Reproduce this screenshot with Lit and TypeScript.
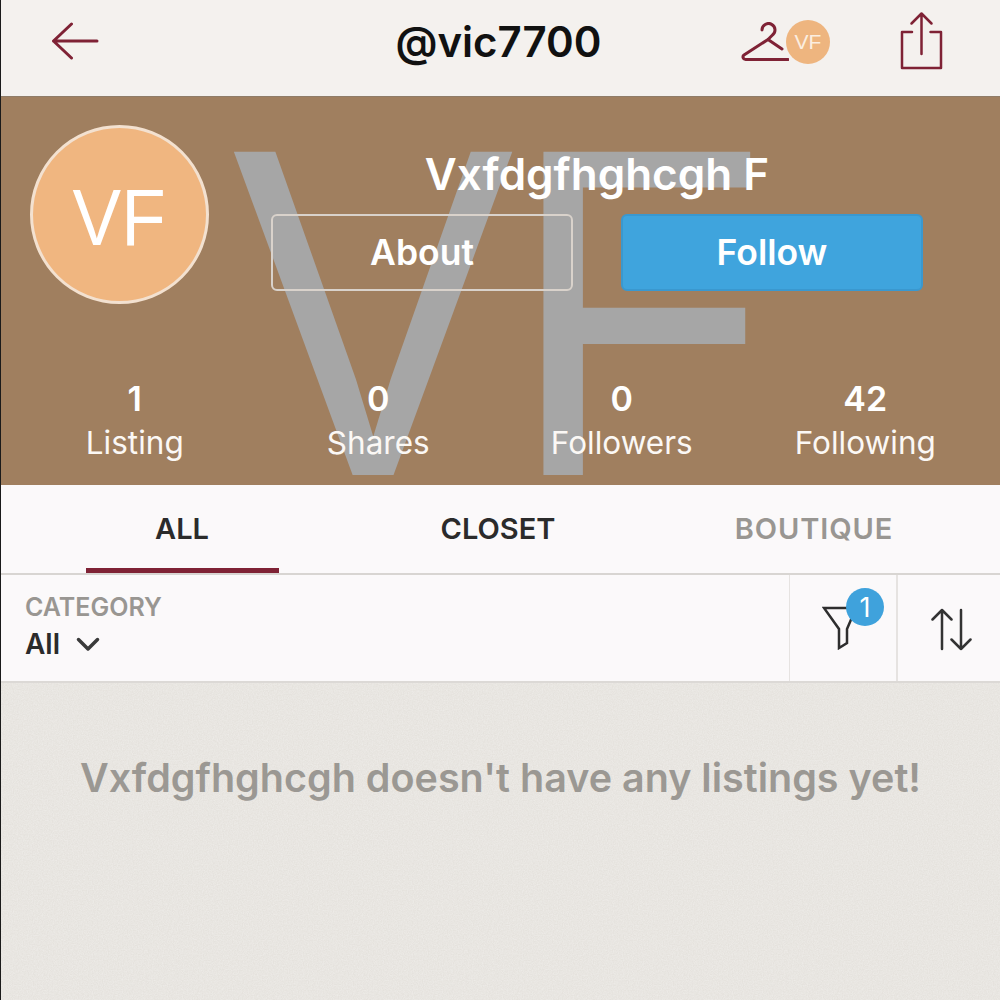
import { LitElement, html, css } from "lit";
import { customElement } from "lit/decorators.js";

@customElement("app-root")
export class AppRoot extends LitElement {
  static styles = css`
    :host { display: block; width: 1000px; height: 1000px; overflow: hidden; font-family: "Inter", "Liberation Sans", sans-serif; font-variant-ligatures: none; }
    * { box-sizing: border-box; }
    .page { height: 1000px; display: flex; flex-direction: column; border-left: 1px solid #1a1a1a; background: #e5e2dd; }
    .header { height: 97px; flex: none; background: #f4f1ee; border-bottom: 1px solid #8f7c68; display: grid; grid-template-columns: 1fr 1fr 1fr; align-items: center; padding: 0 56px 14px 50px; }
    .back { display: block; margin-top: -1px; }
    .handle { font-size: 42px; font-weight: 600; color: #111; text-align: center; white-space: nowrap; padding-left: 2px; }
    .hright { display: flex; justify-content: flex-end; align-items: center; }
    .closet { display: flex; align-items: center; margin-right: 70px; margin-top: 2px; }
    .hanger { margin-top: -1px; }
    .mini { width: 44px; height: 44px; border-radius: 50%; background: #eeb57f; color: #fbeee0; font: 21px "Liberation Sans", sans-serif; display: flex; align-items: center; justify-content: center; margin-left: -3px; }
    .banner { position: relative; height: 388px; flex: none; background: #a07f5f; overflow: hidden; padding: 28px 0 0 29px; color: #fff; }
    .mark { position: absolute; left: 231px; top: -54px; font: 470px/1.15 "Liberation Sans", sans-serif; color: #a6a6a6; white-space: nowrap; letter-spacing: -6px; transform: scaleX(0.9); transform-origin: left top; }
    .top { position: relative; display: flex; gap: 62px; height: 220px; }
    .avatar { width: 179px; height: 179px; flex: none; border-radius: 50%; background: #f0b680; border: 3px solid #f3e1d0; display: flex; align-items: center; justify-content: center; padding-top: 6px; font: 80px "Liberation Sans", sans-serif; color: #fff; }
    .avatar span { display: inline-block; transform: scaleX(0.91); }
    .who { width: 652px; display: flex; flex-direction: column; align-items: center; padding-top: 22px; }
    .name { font-size: 44px; font-weight: 600; line-height: 54px; white-space: nowrap; }
    .btns { display: flex; gap: 48px; margin-top: 13px; align-self: flex-start; }
    .btn { width: 302px; height: 77px; border-radius: 6px; display: flex; align-items: center; justify-content: center; font-size: 35.500px; font-weight: 600; }
    .about { border: 2px solid #d9d2cb; }
    .follow { background: #3fa4dd; border: 2px solid #3a98cf; }
    .stats { position: relative; display: grid; grid-template-columns: repeat(4, 243.5px); margin-left: -17px; margin-top: 33px; text-align: center; }
    .num { font-size: 34px; font-weight: 600; line-height: 42px; }
    .lab { font-size: 31.500px; line-height: 45px; color: #fbf8f5; }
    .tabs { height: 90px; flex: none; background: #fbf9fa; border-bottom: 2px solid #d8d5d2; display: grid; grid-template-columns: repeat(3, 316px); padding: 0 0 0 23px; }
    .tab { display: flex; justify-content: center; font-size: 29px; font-weight: 600; color: #2b2b2b; padding-top: 26px; position: relative; }
    .tab.off { color: #999692; letter-spacing: 0.9px; }
    .bar { position: absolute; left: 62px; width: 193px; bottom: 0; height: 5px; background: #7f2235; }
    .filters { height: 108px; flex: none; background: #fbf9fa; border-bottom: 2px solid #dcd9d6; display: flex; }
    .cat { flex: 1; padding: 17px 0 0 24px; }
    .cat-l { font-size: 25px; font-weight: 600; color: #999692; line-height: 30px; }
    .cat-v { font-size: 28px; font-weight: 600; color: #2b2b2b; display: flex; align-items: center; gap: 16px; line-height: 44px; }
    .cell { border-left: 1px solid #e6e3e1; display: flex; align-items: center; justify-content: center; position: relative; }
    .c1 { width: 107px; }
    .c1 svg { margin-right: 6px; }
    .c2 { width: 104px; border-left-width: 2px; }
    .c2 svg { margin: 3px 0 0 4px; }
    .badge { position: absolute; left: 56px; top: 13px; width: 38px; height: 38px; border-radius: 50%; background: #3fa2dc; color: #fff; font-size: 27px; display: flex; align-items: center; justify-content: center; }
    .empty { position: relative; flex: 1; text-align: center; font-size: 39.500px; font-weight: 600; color: #9b9893; padding-top: 71px; white-space: nowrap; overflow: hidden; }
    .grain { position: absolute; inset: 0; width: 100%; height: 100%; }
    .empty span { position: relative; }
  `;

  render() {
    return html`<div class="page">
      <div class="header">
        <svg class="back" width="48" height="38" viewBox="0 0 48 38" fill="none" stroke="#7f2235" stroke-width="3" stroke-linecap="round" stroke-linejoin="round"><path d="M2.500 19H46M20.500 2 2.500 19 20.500 36"/></svg>
        <div class="handle">@vic7700</div>
        <div class="hright">
          <div class="closet">
            <svg class="hanger" width="48" height="40" viewBox="0 0 48 40" fill="none" stroke="#7f2235" stroke-width="3" stroke-linecap="round" stroke-linejoin="round"><path d="M21 8a6.500 6.500 0 1 1 10 5.500L27 17.500 3 33a2.500 2.500 0 0 0 1.500 4.500H47M27 17.500 41 27"/></svg>
            <div class="mini">VF</div>
          </div>
          <svg width="44" height="60" viewBox="0 0 44 60" fill="none" stroke="#7f2235" stroke-width="2.500" stroke-linecap="round" stroke-linejoin="round"><path d="M12 21H2v36h39V21H30.500M21.500 43V2.500M11.500 12.500l10-10 10 10"/></svg>
        </div>
      </div>
      <div class="banner">
        <div class="mark">VF</div>
        <div class="top">
          <div class="avatar"><span>VF</span></div>
          <div class="who">
            <div class="name">Vxfdgfhghcgh F</div>
            <div class="btns">
              <div class="btn about">About</div>
              <div class="btn follow">Follow</div>
            </div>
          </div>
        </div>
        <div class="stats">
          <div><div class="num">1</div><div class="lab">Listing</div></div>
          <div><div class="num">0</div><div class="lab">Shares</div></div>
          <div><div class="num">0</div><div class="lab">Followers</div></div>
          <div><div class="num">42</div><div class="lab">Following</div></div>
        </div>
      </div>
      <div class="tabs">
        <div class="tab">ALL<div class="bar"></div></div>
        <div class="tab">CLOSET</div>
        <div class="tab off">BOUTIQUE</div>
      </div>
      <div class="filters">
        <div class="cat">
          <div class="cat-l">CATEGORY</div>
          <div class="cat-v">All
            <svg width="24" height="16" viewBox="0 0 24 16" fill="none" stroke="#3a3a3a" stroke-width="3.500" stroke-linecap="round" stroke-linejoin="round"><path d="M2.500 3.500l9.500 9.500 9.500-9.500"/></svg>
          </div>
        </div>
        <div class="cell c1">
          <svg width="36" height="44" viewBox="0 0 36 44" fill="none" stroke="#2e2e2e" stroke-width="2.500"><path d="M2 2H34L25 23V37L17 42V23Z"/></svg>
          <div class="badge">1</div>
        </div>
        <div class="cell c2">
          <svg width="41" height="44" viewBox="0 0 41 44" fill="none" stroke="#333" stroke-width="2.500" stroke-linecap="round" stroke-linejoin="round"><path d="M11 41V2M1.500 11.500 11 2l9.500 9.500M30 2V41M20.500 31.500 30 41l9.500-9.500"/></svg>
        </div>
      </div>
      <div class="empty">
        <svg class="grain" aria-hidden="true">
          <filter id="n"><feTurbulence type="fractalNoise" baseFrequency="0.8" numOctaves="2" seed="4"/><feColorMatrix values="0 0 0 0 1  0 0 0 0 1  0 0 0 0 1  0.5 0 0 0 -0.12"/></filter>
          <rect width="100%" height="100%" filter="url(#n)"/>
        </svg>
        <span>Vxfdgfhghcgh doesn't have any listings yet!</span>
      </div>
    </div>`;
  }
}
